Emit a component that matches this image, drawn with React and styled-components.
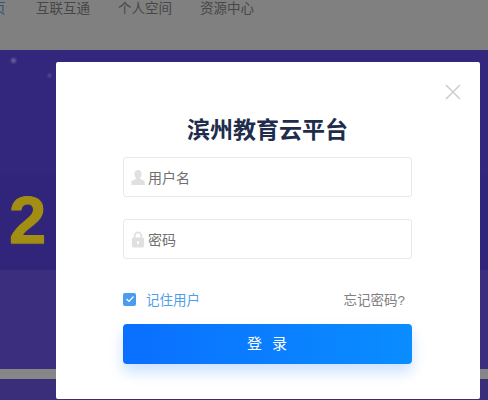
import React from "react";
import styled, { createGlobalStyle } from "styled-components";

const GlobalStyle = createGlobalStyle`
  html, body {
    margin: 0;
    padding: 0;
    height: 400px;
    overflow: hidden;
    background: #808080;
    font-family: "Liberation Sans", "Noto Sans CJK SC", sans-serif;
  }
`;

const UserIcon = () => (
  <FieldIcon viewBox="0 0 14 16">
    <path
      d="M7 0.5c2.2 0 3.6 1.7 3.6 4 0 1.8-.8 3.2-1.7 4 .1.9.7 1.3 2 1.8 1.7.7 2.8 1.3 2.8 2.7V15.500H.3V13c0-1.400 1.100-2 2.800-2.700 1.300-.5 1.900-.9 2-1.800-.9-.8-1.700-2.200-1.700-4 0-2.300 1.400-4 3.600-4z"
      fill="#e0e0e0"
    />
  </FieldIcon>
);

const LockIcon = () => (
  <FieldIcon viewBox="0 0 14 18">
    <path d="M3.500 8V5a3.500 3.500 0 0 1 7 0v3" stroke="#e0e0e0" strokeWidth="1.800" fill="none" />
    <rect x="0.500" y="7" width="13" height="10.500" rx="2" fill="#e0e0e0" />
    <rect x="6" y="10.500" width="2" height="3.500" rx="1" fill="#fff" />
  </FieldIcon>
);

const App = () => {
  return (
    <Page>
      <GlobalStyle />
      <TopNav>
        <NavItem $active>页</NavItem>
        <NavItem>互联互通</NavItem>
        <NavItem>个人空间</NavItem>
        <NavItem>资源中心</NavItem>
      </TopNav>
      <Hero>
        <Speck $x={11} $y={8} $size={5} />
        <Speck $x={48} $y={24} $size={3} />
        <HeroTop />
        <HeroBanner>
          <BigDigit>2</BigDigit>
        </HeroBanner>
        <HeroLower />
        <HeroStrip />
        <HeroBottom />
      </Hero>
      <Modal>
        <CloseButton aria-label="关闭">
          <svg width="16" height="16" viewBox="0 0 16 16">
            <path d="M1 1 L15 15 M15 1 L1 15" stroke="#cfcfcf" strokeWidth="1.600" fill="none" />
          </svg>
        </CloseButton>
        <Title>滨州教育云平台</Title>
        <Field>
          <UserIcon />
          <FieldText>用户名</FieldText>
        </Field>
        <Field>
          <LockIcon />
          <FieldText>密码</FieldText>
        </Field>
        <OptionRow>
          <Remember>
            <CheckBox>
              <svg width="10" height="10" viewBox="0 0 10 10">
                <path d="M1.500 5 L4 7.500 L8.500 2.500" stroke="#fff" strokeWidth="1.200" fill="none" />
              </svg>
            </CheckBox>
            记住用户
          </Remember>
          <Forgot>忘记密码?</Forgot>
        </OptionRow>
        <LoginButton>登 录</LoginButton>
      </Modal>
    </Page>
  );
};

const Page = styled.div`
  position: relative;
  width: 488px;
  height: 400px;
  overflow: hidden;
`;

const TopNav = styled.nav`
  height: 50px;
  box-sizing: border-box;
  margin-left: -8px;
  display: flex;
  gap: 28px;
  background: #808080;
`;

const NavItem = styled.a`
  font-size: 13.500px;
  line-height: 18px;
  color: ${(props) => (props.$active ? "#34527a" : "#474747")};
  width: ${(props) => (props.$active ? "16px" : "auto")};
`;

const Hero = styled.section`
  position: relative;
  height: 350px;
  display: flex;
  flex-direction: column;
`;

const Speck = styled.i`
  position: absolute;
  left: ${(props) => props.$x}px;
  top: ${(props) => props.$y}px;
  width: ${(props) => props.$size}px;
  height: ${(props) => props.$size}px;
  border-radius: 50%;
  background: #6a6399;
  filter: blur(1px);
`;

const HeroTop = styled.div`
  height: 125px;
  background: #33267d;
`;

const HeroBanner = styled.div`
  height: 95px;
  background: #31247b;
  display: flex;
  align-items: center;
  padding: 0 0 6px 9px;
  box-sizing: border-box;
`;

const BigDigit = styled.span`
  font-weight: 700;
  font-size: 67px;
  line-height: 67px;
  color: #a38e14;
  -webkit-text-stroke: 1px #a38e14;
  text-shadow: 0 1px 1px #6d6040;
`;

const HeroLower = styled.div`
  height: 99px;
  background: #3b2e7e;
`;

const HeroStrip = styled.div`
  height: 10px;
  background: #868588;
`;

const HeroBottom = styled.div`
  flex: 1;
  background: #3a2d7a;
`;

const Modal = styled.div`
  position: absolute;
  left: 56px;
  top: 62px;
  width: 424px;
  height: 337px;
  box-sizing: border-box;
  padding: 0 68px 0 67px;
  background: #fff;
  border-radius: 2px;
  display: flex;
  flex-direction: column;
`;

const CloseButton = styled.button`
  position: absolute;
  top: 22px;
  right: 19px;
  padding: 0;
  border: 0;
  background: none;
  display: flex;
`;

const Title = styled.h1`
  margin: 53px 0 0;
  height: 30px;
  font-size: 23px;
  line-height: 30px;
  font-weight: 700;
  text-align: center;
  color: #1f2d4d;
`;

const Field = styled.div`
  height: 40px;
  box-sizing: border-box;
  border: 1px solid #e8e8e8;
  border-radius: 3px;
  display: flex;
  align-items: center;
  gap: 3px;
  padding-left: 7px;
  margin-top: 22px;
  &:first-of-type {
    margin-top: 12px;
  }
`;

const FieldIcon = styled.svg`
  width: 14px;
  height: 17px;
  flex: none;
`;

const FieldText = styled.span`
  font-size: 14px;
  margin-top: -1px;
  color: #707070;
`;

const OptionRow = styled.div`
  margin-top: 30px;
  height: 20px;
  display: flex;
  align-items: center;
  justify-content: space-between;
  padding-right: 7px;
`;

const Remember = styled.label`
  display: flex;
  align-items: center;
  gap: 10px;
  font-size: 13.500px;
  color: #4f9fe8;
`;

const CheckBox = styled.span`
  width: 13px;
  height: 13px;
  border-radius: 2px;
  background: #4a9dee;
  display: flex;
  align-items: center;
  justify-content: center;
`;

const Forgot = styled.a`
  font-size: 13.500px;
  color: #808080;
`;

const LoginButton = styled.button`
  margin-top: 15px;
  height: 40px;
  padding: 0 0 3px 2px;
  border: 0;
  border-radius: 4px;
  color: #fff;
  font-family: inherit;
  font-size: 15px;
  letter-spacing: 3px;
  background: linear-gradient(90deg, #0a6fff, #0a8dff);
  box-shadow: 0 8px 14px rgba(20, 120, 255, 0.22);
`;

export default App;
